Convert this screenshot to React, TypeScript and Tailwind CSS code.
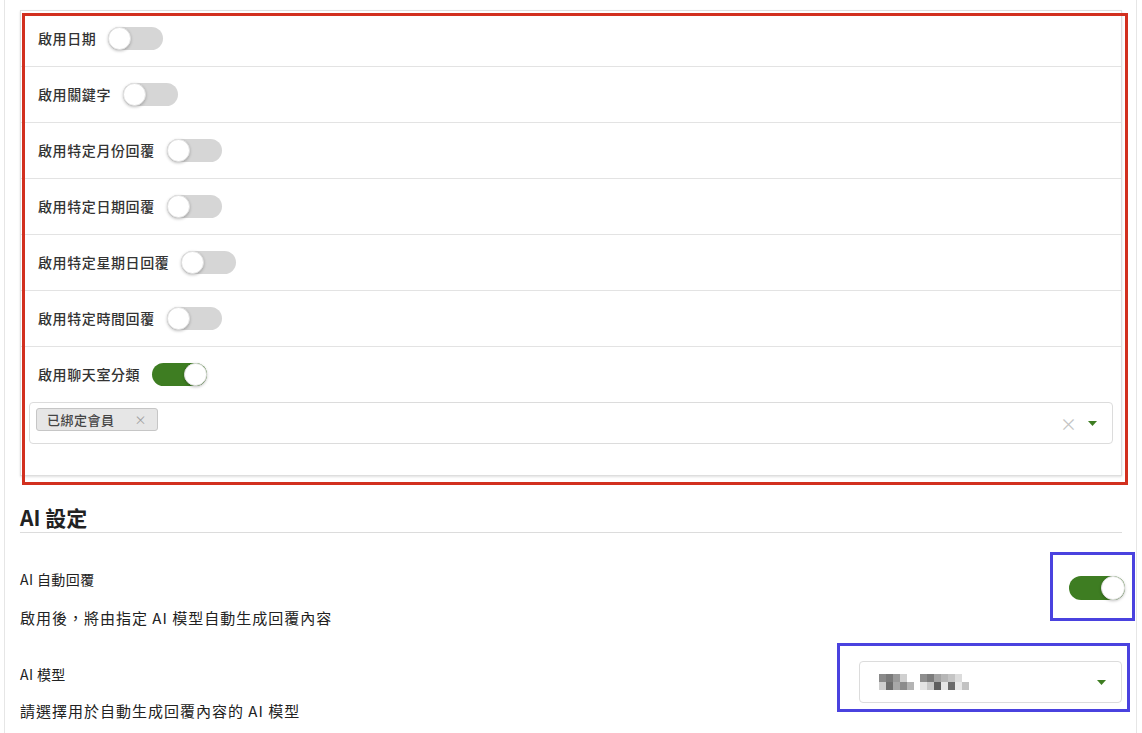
import React from 'react';

const font = { fontFamily: '"Noto Sans CJK TC", "Noto Sans", "Liberation Sans", sans-serif' };

interface ToggleProps {
  on?: boolean;
  wide?: boolean;
}

const Toggle: React.FC<ToggleProps> = ({ on = false, wide = false }) => (
  <div
    className={`relative shrink-0 rounded-full ${wide ? 'h-[24px] w-[56px]' : 'h-[23px] w-[55px]'} ${
      on ? 'bg-[#3e7d22]' : 'bg-[#d6d6d6]'
    }`}
  >
    <div
      className={`absolute top-0 h-full aspect-square rounded-full bg-white border border-[#e2e2e2] shadow-[0_1px_3px_rgba(0,0,0,0.25)] ${
        on ? 'right-0' : 'left-0'
      }`}
    />
  </div>
);

const Caret = () => (
  <svg width="9" height="5" viewBox="0 0 9 5">
    <path d="M0 0 H9 L4.5 5 Z" fill="#3e7d22" />
  </svg>
);

const rows = ['啟用日期', '啟用關鍵字', '啟用特定月份回覆', '啟用特定日期回覆', '啟用特定星期日回覆', '啟用特定時間回覆'];

// mosaic blur of the selected model name
const mosaicA = [
  ['bg-[#8a8a8a]', 'bg-[#7a7a7a]', 'bg-[#9a9a9a]', 'bg-[#d0d0d0]', 'bg-white'],
  ['bg-[#cfcfcf]', 'bg-[#6e6e6e]', 'bg-[#a8a8a8]', 'bg-[#8c8c8c]', 'bg-[#b4b4b4]'],
];
const mosaicB = [
  ['bg-[#8e8e8e]', 'bg-[#7c7c7c]', 'bg-[#a4a4a4]', 'bg-[#b6b6b6]', 'bg-[#c4c4c4]', 'bg-[#dcdcdc]', 'bg-white'],
  ['bg-[#e4e4e4]', 'bg-[#c8c8c8]', 'bg-[#5e5e5e]', 'bg-[#e6e6e6]', 'bg-[#6a6a6a]', 'bg-[#e8e8e8]', 'bg-[#c2c2c2]'],
];

const Mosaic = ({ grid }: { grid: string[][] }) => (
  <div className="flex flex-col">
    {grid.map((r, i) => (
      <div key={i} className="flex">
        {r.map((c, j) => (
          <div key={j} className={`h-[8px] w-[7px] ${c}`} />
        ))}
      </div>
    ))}
  </div>
);

export default function App() {
  return (
    <div className="min-h-[733px] bg-white pl-[4px] pr-[5px] text-[#333]" style={font}>
      <div className="min-h-[733px] border-x border-[#e6e6e6] pl-[15px] pr-[14px] pt-[10px]">
        {/* rule settings card */}
        <div className="relative">
          <div className="border border-[#dedede] bg-white shadow-[0_1px_2px_rgba(0,0,0,0.12)]">
            {rows.map((label) => (
              <div key={label} className="flex h-[56px] items-center gap-[12px] border-b border-[#e3e3e3] pl-[17px]">
                <span className="text-[14px] font-medium tracking-[0.6px] text-[#333]">{label}</span>
                <Toggle />
              </div>
            ))}
            <div className="flex h-[55px] items-center gap-[12px] pl-[17px]">
              <span className="text-[14px] font-medium tracking-[0.6px] text-[#333]">啟用聊天室分類</span>
              <Toggle on />
            </div>
            <div className="px-[8px] pb-[31px]">
              <div className="flex h-[42px] items-start rounded-[4px] border border-[#dcdcdc] pl-[6px] pr-[15px] pt-[5px]">
                <div className="flex h-[23px] items-center gap-[20px] rounded-[3px] border border-[#c6c6c6] bg-[#e6e6e6] pl-[10px] pr-[10px]">
                  <span className="text-[13px] font-medium tracking-[0.5px] text-[#444]">已綁定會員</span>
                  <span className="text-[12px] text-[#a0a0a0]">×</span>
                </div>
                <div className="flex-1" />
                <div className="flex h-[30px] items-center">
                  <span className="mr-[11px] text-[17px] leading-none text-[#c4c4c4]">×</span>
                  <Caret />
                </div>
              </div>
            </div>
          </div>
          <div className="pointer-events-none absolute left-[2px] top-[3px] h-[472px] w-[1106px] border-[3px] border-[#d2301f]" />
        </div>

        {/* AI settings */}
        <div className="mt-[27px] border-b border-[#dcdcdc] pb-px">
          <h2 className="text-[21px] font-bold leading-[28px] text-[#222]">AI 設定</h2>
        </div>

        <div className="mt-[36px] flex items-start justify-between">
          <div className="flex flex-col">
            <span className="text-[14px] leading-[20px] tracking-[0.4px] text-[#222]">AI 自動回覆</span>
            <span className="mt-[18px] text-[15px] leading-[22px] tracking-[1px] text-[#222]">
              啟用後，將由指定 AI 模型自動生成回覆內容
            </span>
          </div>
          <div className="relative mr-[-3px] mt-[7px]">
            <Toggle on wide />
            <div className="pointer-events-none absolute left-[-19px] top-[-24px] h-[69px] w-[85px] border-[3px] border-[#4a42df]" />
          </div>
        </div>

        <div className="mt-[35px] flex items-start justify-between">
          <div className="flex flex-col">
            <span className="text-[14px] leading-[20px] tracking-[0.4px] text-[#222]">AI 模型</span>
            <span className="mt-[16px] text-[15px] leading-[22px] tracking-[1px] text-[#222]">
              請選擇用於自動生成回覆內容的 AI 模型
            </span>
          </div>
          <div className="relative mt-[-3px]">
            <div className="flex h-[42px] w-[263px] items-center rounded-[4px] border border-[#dcdcdc] bg-white pl-[19px] pr-[15px]">
              <Mosaic grid={mosaicA} />
              <div className="w-[6px]" />
              <Mosaic grid={mosaicB} />
              <div className="flex-1" />
              <Caret />
            </div>
            <div className="pointer-events-none absolute left-[-22px] top-[-18px] h-[69px] w-[293px] border-[3px] border-[#4a42df]" />
          </div>
        </div>
      </div>
    </div>
  );
}
